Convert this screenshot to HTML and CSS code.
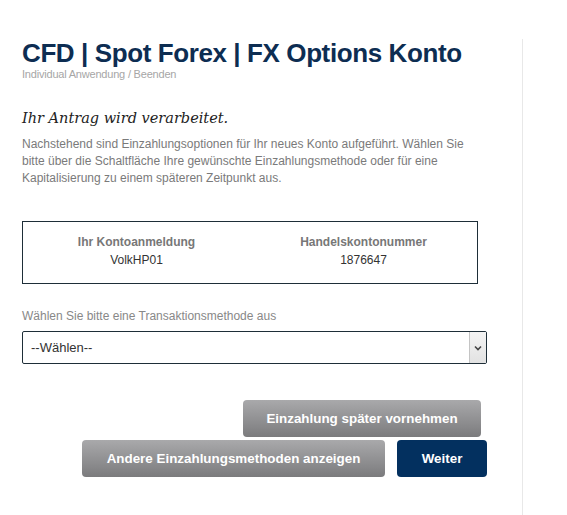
FILE: index.html
```html
<!DOCTYPE html>
<html>

<head>
    <link rel="stylesheet" href="styles.css">
    <title>Konto</title>
</head>

<body>
    <div class="page">
        <div class="main">
            <h1>CFD | Spot Forex | FX Options Konto</h1>
            <div class="subtitle">Individual Anwendung / Beenden</div>

            <h2>Ihr Antrag wird verarbeitet.</h2>
            <p class="intro">Nachstehend sind Einzahlungsoptionen für Ihr neues Konto aufgeführt. Wählen Sie bitte über die Schaltfläche Ihre gewünschte Einzahlungsmethode oder für eine Kapitalisierung zu einem späteren Zeitpunkt aus.</p>

            <div class="account-box">
                <div class="account-col">
                    <div class="account-head">Ihr Kontoanmeldung</div>
                    <div class="account-value">VolkHP01</div>
                </div>
                <div class="account-col">
                    <div class="account-head">Handelskontonummer</div>
                    <div class="account-value">1876647</div>
                </div>
            </div>

            <label class="method-label" for="method">Wählen Sie bitte eine Transaktionsmethode aus</label>
            <div class="select-wrap">
                <select id="method" name="method">
                    <option>--Wählen--</option>
                </select>
                <span class="select-arrow">
                    <svg width="8" height="6" viewBox="0 0 8 6"><path d="M1 1.5 L4 4.5 L7 1.5" fill="none" stroke="#444" stroke-width="1.6"/></svg>
                </span>
            </div>

            <div class="actions">
                <div class="row row-top">
                    <button type="button" class="btn btn-gray btn-later">Einzahlung später vornehmen</button>
                </div>
                <div class="row">
                    <button type="button" class="btn btn-gray btn-other">Andere Einzahlungsmethoden anzeigen</button>
                    <button type="button" class="btn btn-blue">Weiter</button>
                </div>
            </div>
        </div>
    </div>
</body>

</html>
```

FILE: styles.css
```css
body {
    margin: 0;
    padding: 0;
    background-color: #fff;
    font-family: "Liberation Sans", Arial, sans-serif;
}

.page {
    padding-top: 39px;
}

.main {
    width: 500px;
    min-height: 476px;
    padding-left: 22px;
    border-right: 1px solid #e8e8e8;
    box-sizing: content-box;
}

.main > * {
    width: 465px;
}

h1 {
    margin: 0;
    padding-top: 0;
    font-size: 26px;
    line-height: 29px;
    font-weight: bold;
    color: #0d2d52;
    letter-spacing: -0.4px;
}

.subtitle {
    font-size: 11px;
    line-height: 12px;
    color: #a6a6a6;
    letter-spacing: -0.2px;
}

h2 {
    margin: 27px 0 0 0;
    font-family: "DejaVu Serif", Georgia, serif;
    font-style: italic;
    font-weight: normal;
    font-size: 14.5px;
    line-height: 22px;
    color: #222;
}

.intro {
    margin: 7px 0 0 0;
    font-size: 12px;
    line-height: 17px;
    color: #7a7a7a;
}

.account-box {
    box-sizing: border-box;
    width: 456px;
    height: 63px;
    margin-top: 34px;
    border: 1px solid #1e2e38;
    display: flex;
    align-items: center;
    padding: 0 0 4px 0;
}

.account-col {
    flex: 1;
    text-align: center;
    font-size: 12px;
    line-height: 18px;
}

.account-head {
    font-weight: bold;
    color: #777;
}

.account-value {
    color: #333;
}

.method-label {
    display: block;
    margin-top: 25px;
    font-size: 12px;
    line-height: 14px;
    color: #888;
}

.select-wrap {
    position: relative;
    margin-top: 8px;
    height: 33px;
}

.select-wrap select {
    appearance: none;
    -webkit-appearance: none;
    width: 100%;
    height: 33px;
    box-sizing: border-box;
    border: 1px solid #1e2e38;
    border-radius: 2px;
    background: #fff;
    padding: 0 0 0 8px;
    font-family: "Liberation Sans", Arial, sans-serif;
    font-size: 13px;
    color: #333;
}

.select-arrow {
    position: absolute;
    right: 1px;
    top: 1px;
    width: 16px;
    height: 31px;
    background: linear-gradient(#f4f4f4, #e2e2e2);
    border-left: 1px solid #c4c4c4;
    display: flex;
    align-items: center;
    justify-content: center;
}

.actions {
    margin-top: 36px;
}

.row {
    display: flex;
    justify-content: flex-end;
    gap: 12px;
}

.row-top {
    padding-right: 6px;
    margin-bottom: 3px;
}

.btn {
    height: 37px;
    border: none;
    border-radius: 4px;
    color: #fff;
    font-family: "Liberation Sans", Arial, sans-serif;
    font-size: 13.4px;
    font-weight: bold;
    cursor: pointer;
}

.btn-gray {
    background: linear-gradient(#a9a9ab, #7b7b7d);
}

.btn-later {
    width: 238px;
}

.btn-other {
    width: 303px;
}

.btn-blue {
    width: 90px;
    background-color: #03305f;
}
```
